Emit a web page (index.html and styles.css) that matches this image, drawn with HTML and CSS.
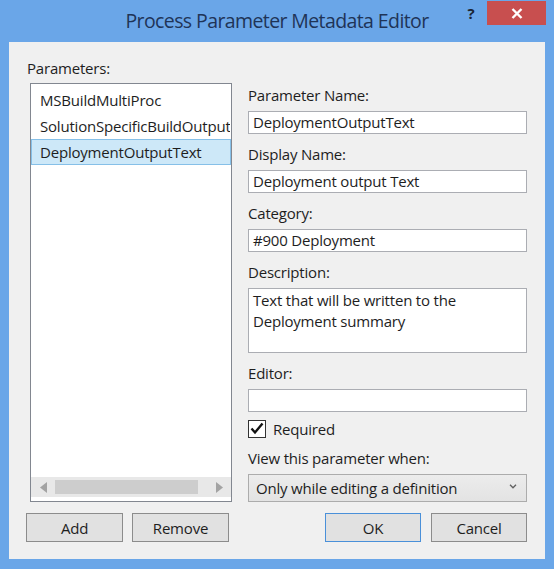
FILE: index.html
```html
<!DOCTYPE html>
<html>
<head>
<meta charset="utf-8">
<link rel="stylesheet" href="styles.css">
</head>
<body>
<div class="window">
  <div class="titlebar">
    <div class="title">Process Parameter Metadata Editor</div>
    <div class="caption-buttons">
      <div class="help">?</div>
      <div class="close">
        <svg width="12" height="11" viewBox="0 0 12 11"><path d="M1.5 1 L10.5 10 M10.5 1 L1.5 10" stroke="#fff" stroke-width="2.4" fill="none"/></svg>
      </div>
    </div>
  </div>
  <div class="client">
    <div class="header-label">Parameters:</div>
    <div class="main">
      <div class="listbox">
        <div class="item">MSBuildMultiProc</div>
        <div class="item">SolutionSpecificBuildOutputs</div>
        <div class="item selected">DeploymentOutputText</div>
        <div class="hscroll">
          <div class="arrow">
            <svg width="7" height="11" viewBox="0 0 7 11"><path d="M7 0 L0 5.5 L7 11 Z" fill="#a3a3a3"/></svg>
          </div>
          <div class="track"><div class="thumb"></div></div>
          <div class="arrow">
            <svg width="7" height="11" viewBox="0 0 7 11"><path d="M0 0 L7 5.5 L0 11 Z" fill="#a3a3a3"/></svg>
          </div>
        </div>
      </div>
      <div class="fields">
        <div class="label first">Parameter Name:</div>
        <div class="textbox">DeploymentOutputText</div>
        <div class="label">Display Name:</div>
        <div class="textbox">Deployment output Text</div>
        <div class="label">Category:</div>
        <div class="textbox">#900 Deployment</div>
        <div class="label">Description:</div>
        <div class="textbox textarea">Text that will be written to the<br>Deployment summary</div>
        <div class="label">Editor:</div>
        <div class="textbox"></div>
        <div class="check-row">
          <div class="checkbox">
            <svg width="14" height="13" viewBox="0 0 14 13"><path d="M1.5 6.5 L5 10.5 L12.5 1.5" stroke="#111" stroke-width="2.4" fill="none"/></svg>
          </div>
          <span>Required</span>
        </div>
        <div class="label">View this parameter when:</div>
        <div class="combo">
          <span>Only while editing a definition</span>
          <svg class="chev" width="8" height="5" viewBox="0 0 8 5"><path d="M1 0.8 L4 3.8 L7 0.8" stroke="#606060" stroke-width="1.3" fill="none"/></svg>
        </div>
      </div>
    </div>
    <div class="buttons">
      <div class="btn-group">
        <div class="btn">Add</div>
        <div class="btn">Remove</div>
      </div>
      <div class="btn-group right">
        <div class="btn default">OK</div>
        <div class="btn">Cancel</div>
      </div>
    </div>
  </div>
</div>
</body>
</html>
```
FILE: styles.css
```css
* { box-sizing: border-box; }
html, body { margin: 0; padding: 0; }
body {
  font-family: "Open Sans", "Noto Sans", sans-serif;
  font-size: 15px;
  letter-spacing: -0.2px;
  color: #1e1e1e;
}
.window {
  width: 554px;
  height: 569px;
  background: #6aa6e8;
  display: flex;
  flex-direction: column;
  overflow: hidden;
}
.titlebar {
  position: relative;
  height: 42px;
  flex: none;
}
.title {
  text-align: center;
  font-size: 19.5px;
  letter-spacing: -0.6px;
  line-height: 42px;
  color: #1f3457;
}
.caption-buttons {
  position: absolute;
  top: 1px;
  right: 8px;
  display: flex;
  align-items: flex-start;
}
.help {
  width: 32px;
  height: 24px;
  text-align: center;
  font-weight: bold;
  font-size: 15px;
  line-height: 24px;
  color: #1b2433;
}
.close {
  width: 59px;
  height: 24px;
  background: #c84f4f;
  display: flex;
  align-items: center;
  justify-content: center;
}
.client {
  margin: 0 9px;
  height: 517px;
  background: #f0f0f0;
  padding: 16px 18px 0 21px;
  display: flex;
  flex-direction: column;
}
.header-label {
  line-height: 20px;
  height: 20px;
  margin-left: -3px;
  margin-bottom: 5px;
}
.main {
  display: grid;
  grid-template-columns: 202px 279px;
  column-gap: 16px;
  height: 419px;
}
.listbox {
  border: 1px solid #828790;
  background: #fff;
  display: flex;
  flex-direction: column;
  padding: 3px 0 4px;
  overflow: hidden;
}
.item {
  height: 26px;
  line-height: 24px;
  border: 1px solid transparent;
  padding-left: 8px;
  white-space: nowrap;
  overflow: hidden;
}
.item.selected {
  background: #cde8f8;
  border-color: #86c0e8;
}
.hscroll {
  margin-top: auto;
  height: 20px;
  background: #e8e8e8;
  display: flex;
  align-items: center;
}
.arrow {
  width: 24px;
  height: 20px;
  display: flex;
  align-items: center;
  justify-content: center;
}
.track {
  flex: 1;
  height: 20px;
  display: flex;
  align-items: center;
}
.thumb {
  width: 143px;
  height: 14px;
  background: #cdcdcd;
}
.fields {
  padding-top: 2px;
  display: flex;
  flex-direction: column;
}
.label {
  line-height: 20px;
  height: 20px;
  margin-top: 10px;
  margin-bottom: 6px;
}
.label.first { margin-top: 0; }
.textbox {
  height: 23px;
  border: 1px solid #abadb3;
  background: #fff;
  padding-left: 4px;
  line-height: 21px;
  white-space: nowrap;
}
.textbox.textarea {
  height: 65px;
  padding-top: 1px;
  white-space: normal;
}
.check-row {
  margin-top: 7px;
  height: 19px;
  display: flex;
  align-items: center;
  gap: 7px;
}
.checkbox {
  width: 18px;
  height: 18px;
  border: 1px solid #333;
  background: #fff;
  display: flex;
  align-items: center;
  justify-content: center;
}
.combo {
  height: 28px;
  border: 1px solid #acacac;
  background: linear-gradient(#ececec, #e3e3e3);
  display: flex;
  align-items: center;
  justify-content: space-between;
  padding: 0 9px 0 7px;
}
.chev { margin-top: -4px; }
.buttons {
  margin-top: 11px;
  display: flex;
}
.btn-group {
  display: flex;
  gap: 9px;
  margin-left: -4px;
}
.btn-group.right {
  margin-left: auto;
  gap: 10px;
}
.btn {
  width: 97px;
  height: 29px;
  border: 1px solid #8c8c8c;
  background: #e1e1e1;
  display: flex;
  align-items: center;
  justify-content: center;
}
.btn-group.right .btn { width: 96px; }
.btn.default {
  border-color: #4a90d9;
}
```
